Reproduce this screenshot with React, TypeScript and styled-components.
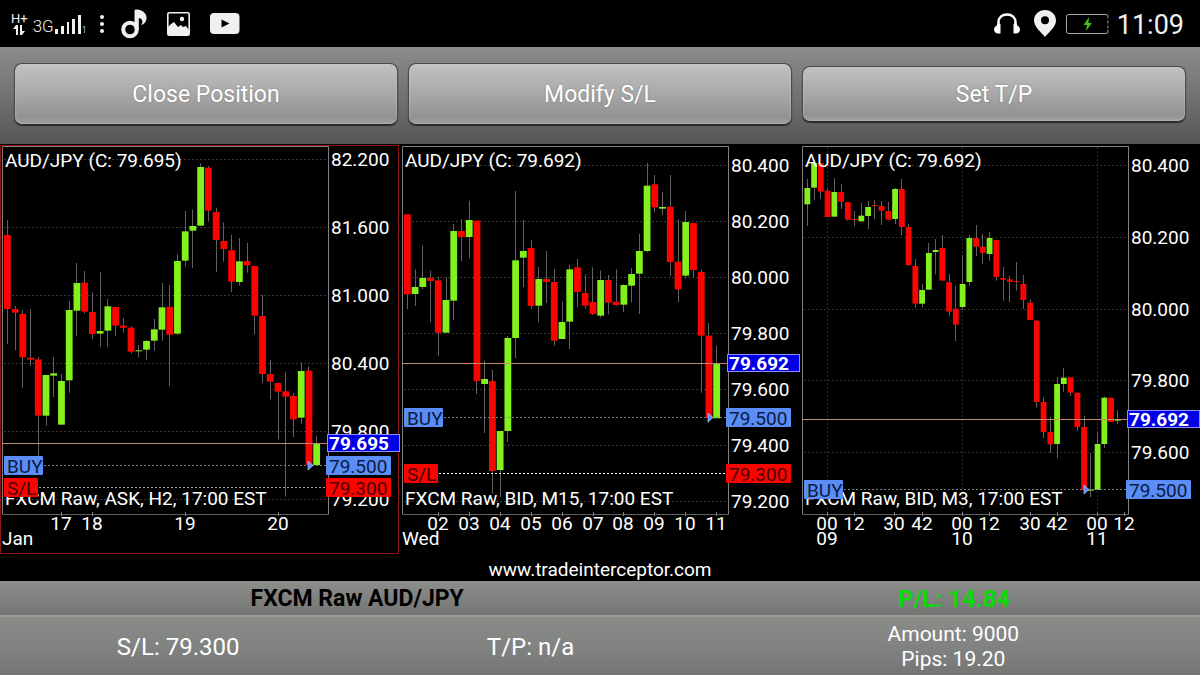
import React from "react";
import styled, { createGlobalStyle } from "styled-components";

const GlobalStyle = createGlobalStyle`
  * { box-sizing: border-box; }
  body { margin: 0; background: #000; font-family: Roboto, "Liberation Sans", sans-serif; }
`;

const Screen = styled.div`
  min-height: 100vh;
  display: flex;
  flex-direction: column;
  background: #000;
  color: #fff;
`;

/* ---------- status bar ---------- */

const StatusBar = styled.header`
  height: 47px;
  display: flex;
  align-items: center;
  justify-content: space-between;
  padding: 0 16px 0 11px;
  color: #f0f0f0;
`;

const StatusGroup = styled.div<{ $gap: number }>`
  display: flex;
  align-items: center;
  gap: ${(p) => p.$gap}px;
`;

const DataMode = styled.div`
  display: flex;
  flex-direction: column;
  align-items: center;
  font-size: 13px;
  line-height: 13px;
`;

const NetworkType = styled.div`
  display: flex;
  align-items: flex-end;
  gap: 1px;
  font-size: 17px;
  font-weight: 300;
  line-height: 18px;
  padding-top: 2px;
`;

const SimSlot = styled.span`
  font-size: 9px;
  line-height: 10px;
`;

const Clock = styled.time`
  font-size: 27px;
  line-height: 32px;
  padding-top: 2px;
`;

/* ---------- toolbar ---------- */

const Toolbar = styled.nav`
  display: grid;
  grid-template-columns: repeat(3, 1fr);
  gap: 10px;
  align-items: center;
  height: 97px;
  padding: 0 14px 3px;
  background: linear-gradient(#8c8c8c, #727272 50%, #565656);
`;

const ToolButton = styled.button<{ $flat?: boolean }>`
  height: ${(p) => (p.$flat ? 56 : 62)}px;
  padding: 2px 8px 0;
  border: 1px solid #4a4a4a;
  border-bottom-color: #2a2a2a;
  border-radius: 8px;
  background: linear-gradient(#c2c2c2, #a8a8a8 50%, #929292 88%, #a0a0a0);
  box-shadow: 0 1px 1px #2a2a2a, inset 0 0 2px #d0d0d0;
  color: #fff;
  font: 400 23px/30px Roboto, "Liberation Sans", sans-serif;
  text-shadow: 0 0 2px rgba(60, 60, 60, 0.4);
`;

/* ---------- charts ---------- */

const ChartRow = styled.main`
  display: grid;
  grid-template-columns: repeat(3, 1fr);
`;

const ChartSvg = styled.svg`
  display: block;
  width: 100%;
  height: auto;
  font-family: Roboto, "Liberation Sans", sans-serif;
  font-size: 19px;
  fill: #fff;
`;

const SiteLine = styled.p`
  margin: 0;
  padding-top: 4px;
  font-size: 19px;
  line-height: 22px;
  text-align: center;
`;

/* ---------- position summary ---------- */

const Summary = styled.footer`
  flex: 1;
  display: flex;
  flex-direction: column;
  background: #80827f;
`;

const SummaryTitle = styled.div`
  display: grid;
  grid-template-columns: 10fr 7fr;
  align-items: center;
  height: 34px;
  padding-left: 6px;
  text-align: center;
  color: #000;
  border-top: 1px solid #8e8e8e;
  background: linear-gradient(#8b8d8a, #757673);
`;

const Instrument = styled.strong`
  font-size: 23px;
  line-height: 32px;
  font-weight: 700;
`;

const Profit = styled.strong`
  font-size: 24px;
  line-height: 34px;
  font-weight: 700;
  color: #0ad80a;
`;

const SummaryBody = styled.div`
  flex: 1;
  display: grid;
  grid-template-columns: 5fr 5fr 7fr;
  align-items: center;
  min-height: 60px;
  padding: 2px 0 0 2px;
  text-align: center;
  border-top: 2px solid #9b9c9a;
  background: linear-gradient(#8a8c88, #7f8180 60%, #757573);
`;

const Level = styled.span`
  font-size: 24px;
  line-height: 32px;
`;

const Stats = styled.div`
  font-size: 21px;
  line-height: 25px;
`;

/* ---------- chart data ---------- */

/* direction, body top, body bottom, wick top, wick bottom, in thirds of a unit */
type Candle = ["u" | "d", number, number, number, number];

interface Label {
  at: number;
  text: string;
}

interface ChartSpec {
  title: string;
  caption: string;
  step: number;
  candles: Candle[];
  prices: Label[];
  times: Label[];
  dates: Label[];
  verticals?: number[];
  current: Label;
  buy: { at: number; text: string; arrow: number };
  stop?: Label;
  selected?: boolean;
}

const twoHours: Candle[] = [
  ["d", 270, 492, 225, 597], ["d", 492, 503, 483, 615], ["d", 507, 637, 495, 728],
  ["d", 638, 644, 492, 663], ["d", 643, 812, 636, 933], ["u", 690, 812, 690, 842],
  ["u", 685, 692, 636, 756], ["u", 708, 839, 687, 839], ["u", 495, 706, 468, 743],
  ["u", 414, 497, 354, 573], ["d", 413, 500, 378, 506], ["d", 501, 567, 443, 582],
  ["u", 558, 566, 381, 605], ["u", 484, 557, 462, 605], ["d", 486, 542, 486, 573],
  ["d", 542, 548, 519, 563], ["d", 548, 620, 544, 626], ["u", 616, 619, 600, 637],
  ["u", 588, 614, 585, 645], ["u", 553, 587, 522, 617], ["u", 487, 554, 414, 587],
  ["d", 486, 569, 420, 723], ["u", 348, 566, 328, 570], ["u", 259, 347, 198, 365],
  ["u", 243, 257, 193, 369], ["u", 66, 242, 55, 242], ["d", 68, 197, 63, 230],
  ["d", 201, 285, 188, 381], ["d", 288, 312, 232, 350], ["d", 316, 410, 270, 441],
  ["u", 349, 411, 279, 422], ["d", 348, 361, 294, 383], ["d", 363, 512, 363, 568],
  ["d", 513, 687, 450, 713], ["d", 687, 710, 645, 763], ["d", 714, 740, 714, 883],
  ["d", 739, 755, 682, 1055], ["d", 753, 823, 744, 876], ["u", 678, 818, 652, 836],
  ["d", 677, 960, 664, 960], ["u", 897, 960, 872, 960],
];

const fifteenMinutes: Candle[] = [
  ["d", 208, 448, 208, 492], ["u", 426, 447, 373, 483], ["u", 399, 426, 302, 432],
  ["d", 399, 408, 377, 531], ["d", 406, 563, 396, 633], ["u", 465, 563, 398, 563],
  ["u", 258, 467, 237, 525], ["d", 258, 276, 222, 348], ["u", 225, 276, 167, 339],
  ["d", 227, 708, 227, 747], ["u", 702, 717, 647, 864], ["d", 708, 978, 675, 1045],
  ["u", 858, 975, 858, 1056], ["u", 579, 858, 573, 891], ["u", 346, 579, 138, 639],
  ["u", 318, 338, 225, 426], ["d", 309, 483, 285, 491], ["u", 402, 482, 366, 531],
  ["d", 402, 411, 318, 474], ["d", 411, 587, 372, 602], ["u", 531, 582, 471, 582],
  ["u", 373, 530, 360, 612], ["d", 367, 441, 342, 487], ["d", 444, 482, 388, 491],
  ["d", 471, 507, 367, 510], ["u", 405, 512, 377, 518], ["d", 405, 473, 390, 508],
  ["d", 470, 480, 373, 482], ["u", 420, 479, 418, 501], ["u", 387, 422, 369, 472],
  ["u", 318, 386, 267, 507], ["u", 122, 318, 54, 322], ["d", 118, 187, 90, 201],
  ["u", 186, 191, 141, 210], ["d", 185, 351, 90, 393], ["d", 350, 433, 222, 471],
  ["u", 231, 392, 198, 401], ["d", 234, 375, 234, 397], ["d", 381, 572, 373, 743],
  ["d", 572, 819, 534, 834], ["u", 655, 820, 602, 820],
];

const threeMinutes: Candle[] = [
  ["u", 129, 178, 102, 243], ["u", 54, 128, 50, 165], ["d", 54, 140, 54, 161],
  ["d", 137, 216, 130, 216], ["u", 141, 215, 99, 215], ["d", 141, 170, 117, 192],
  ["d", 171, 224, 171, 227], ["d", 222, 224, 198, 243], ["u", 212, 229, 173, 229],
  ["u", 186, 213, 168, 252], ["d", 180, 183, 165, 222], ["d", 183, 197, 168, 240],
  ["d", 198, 224, 171, 224], ["u", 132, 222, 129, 237], ["d", 132, 246, 102, 270],
  ["d", 246, 360, 237, 363], ["d", 363, 476, 342, 488], ["u", 435, 476, 417, 488],
  ["u", 324, 434, 294, 434], ["u", 315, 321, 282, 388], ["d", 309, 407, 270, 407],
  ["d", 412, 500, 387, 512], ["d", 491, 539, 423, 588], ["u", 417, 486, 330, 495],
  ["u", 279, 411, 270, 422], ["d", 279, 305, 240, 333], ["d", 305, 324, 267, 357],
  ["u", 279, 327, 261, 347], ["d", 285, 396, 285, 407], ["d", 399, 404, 366, 467],
  ["d", 403, 410, 392, 471], ["d", 408, 411, 351, 437], ["d", 417, 465, 390, 492],
  ["d", 473, 525, 463, 525], ["d", 527, 771, 525, 788], ["d", 771, 861, 758, 879],
  ["d", 861, 898, 816, 924], ["u", 717, 897, 696, 939], ["u", 698, 717, 669, 740],
  ["d", 697, 743, 697, 753], ["d", 743, 846, 743, 857], ["d", 846, 1035, 812, 1035],
  ["u", 1034, 1037, 924, 1056], ["u", 897, 1035, 860, 1035], ["u", 758, 897, 755, 909],
  ["d", 758, 831, 758, 831], ["u", 824, 827, 795, 837],
];

const labels = (first: number, step: number, texts: string[]): Label[] =>
  texts.map((text, i) => ({ at: first + i * step, text }));

const charts: ChartSpec[] = [
  {
    title: "AUD/JPY (C: 79.695)",
    caption: "FXCM Raw, ASK, H2, 17:00 EST",
    step: 23.2,
    candles: twoHours,
    prices: labels(43, 204, ["82.200", "81.600", "81.000", "80.400", "79.800", "79.200"]),
    times: [
      { at: 185, text: "17" }, { at: 278, text: "18" },
      { at: 556, text: "19" }, { at: 834, text: "20" },
    ],
    dates: [{ at: 0, text: "Jan" }],
    current: { at: 896, text: "79.695" },
    buy: { at: 962, text: "79.500", arrow: 925 },
    stop: { at: 1028, text: "79.300" },
    selected: true,
  },
  {
    title: "AUD/JPY (C: 79.692)",
    caption: "FXCM Raw, BID, M15, 17:00 EST",
    step: 23.2,
    candles: fifteenMinutes,
    prices: labels(61, 168, ["80.400", "80.200", "80.000", "79.800", "79.600", "79.400", "79.200"]),
    times: labels(116, 92.6, ["02", "03", "04", "05", "06", "07", "08", "09", "10", "11"]),
    dates: [{ at: 0, text: "Wed" }],
    current: { at: 655, text: "79.692" },
    buy: { at: 818, text: "79.500", arrow: 925 },
    stop: { at: 985, text: "79.300" },
  },
  {
    title: "AUD/JPY (C: 79.692)",
    caption: "FXCM Raw, BID, M3, 17:00 EST",
    step: 20.25,
    candles: threeMinutes,
    prices: labels(61, 215.5, ["80.400", "80.200", "80.000", "79.800", "79.600"]),
    times: [
      { at: 82, text: "00" }, { at: 163, text: "12" }, { at: 284, text: "30" },
      { at: 366, text: "42" }, { at: 487, text: "00" }, { at: 568, text: "12" },
      { at: 690, text: "30" }, { at: 771, text: "42" }, { at: 892, text: "00" },
      { at: 974, text: "12" },
    ],
    dates: [{ at: 82, text: "09" }, { at: 487, text: "10" }, { at: 892, text: "11" }],
    verticals: [82, 487, 892],
    current: { at: 823, text: "79.692" },
    buy: { at: 1032, text: "79.500", arrow: 852 },
  },
];

const px = (v: number) => Math.floor(v / 3);

function OrderTags({ y, color, ink, name, price }: {
  y: number; color: string; ink: string; name: string; price: string;
}) {
  const width = name === "BUY" ? 39 : 34;
  return (
    <g>
      <rect x={4} y={y - 9} width={width} height={19} rx={1} fill={color} />
      <text x={7} y={y + 8} fill={ink}>{name}</text>
      <rect x={326} y={y - 9} width={65} height={19} rx={1} fill={color} />
      <text x={329} y={y + 8} fill={ink}>{price}</text>
    </g>
  );
}

function Chart({ spec }: { spec: ChartSpec }) {
  const current = px(spec.current.at);
  const buy = px(spec.buy.at);
  const stop = spec.stop ? px(spec.stop.at) : 0;
  const arrow = px(spec.buy.arrow);
  return (
    <ChartSvg viewBox="0 -1 400 411" role="img" aria-label={spec.title}>
      {spec.selected && (
        <rect x={0.5} y={0.5} width={398} height={408} fill="none" stroke="#8c1616" />
      )}
      <g stroke={spec.verticals ? "#2c2c2c" : "#383838"} strokeDasharray="2 2">
        {spec.prices.map((p) => (
          <line key={p.at} x1={4} x2={328} y1={px(p.at) + 0.5} y2={px(p.at) + 0.5} />
        ))}
        {spec.verticals?.map((v) => (
          <line key={v} x1={px(v) + 0.5} x2={px(v) + 0.5} y1={2} y2={369} />
        ))}
      </g>
      <path d="M2.5 369V1.5H328.5V369.5" fill="none" stroke="#808080" />
      <path d="M2.5 369.5H328.5" stroke="#606060" />
      {spec.times.map((t) => (
        <line key={t.at} x1={px(t.at) + 0.5} x2={px(t.at) + 0.5} y1={367} y2={371} stroke="#808080" />
      ))}

      {spec.candles.map(([dir, top, bottom, high, low], i) => {
        const x = (22 + i * spec.step) / 3;
        const half = spec.step > 22 ? 3.4 : 2.9;
        return (
          <g key={i}>
            <line x1={Math.floor(x) + 0.5} x2={Math.floor(x) + 0.5} y1={high / 3} y2={low / 3} stroke="#626262" />
            <rect
              x={x - half}
              y={top / 3}
              width={half * 2}
              height={Math.max(1, (bottom - top) / 3)}
              fill={dir === "u" ? "#84f01c" : "#fb0400"}
            />
          </g>
        );
      })}

      <line x1={2} x2={328} y1={current + 0.5} y2={current + 0.5} stroke="#c08a6c" />
      <line x1={44} x2={326} y1={buy + 0.5} y2={buy + 0.5} stroke="#7c7c7c" strokeDasharray="2 2" />
      {spec.stop && (
        <line x1={39} x2={326} y1={stop + 0.5} y2={stop + 0.5}
          stroke={spec.selected ? "#a0a0a0" : "#fff"} strokeDasharray="2 2" />
      )}
      <path d={`M${arrow} ${buy - 4}l5 4.500l-5 4.500z`} fill="#5b8fff" stroke="#c8d8ff" strokeWidth={0.6} />

      <text x={5} y={22}>{spec.title}</text>
      <text x={5} y={360}>{spec.caption}</text>
      {spec.prices.map((p) => (
        <text key={p.at} x={331} y={px(p.at) + 7}>{p.text}</text>
      ))}
      {spec.times.map((t) => (
        <text key={t.at} x={px(t.at)} y={385} textAnchor="middle">{t.text}</text>
      ))}
      {spec.dates.map((d) => (
        <text key={d.at} x={d.at ? px(d.at) : 2} y={400} textAnchor={d.at ? "middle" : "start"}>{d.text}</text>
      ))}

      <OrderTags y={buy} color="#5a8df5" ink="#0c1c40" name="BUY" price={spec.buy.text} />
      {spec.stop && <OrderTags y={stop} color="#fb0400" ink="#4a0000" name="S/L" price={spec.stop.text} />}
      <rect x={327.5} y={current - 8.5} width={72} height={17} fill="#0000e6" stroke="#8c8cff" />
      <text x={329} y={current + 7} fontWeight={700}>{spec.current.text}</text>
    </ChartSvg>
  );
}

/* ---------- status icons ---------- */

const Arrows = () => (
  <svg width="12" height="11" viewBox="0 0 12 11" fill="#f0f0f0">
    <path d="M3 0h2v10H3V4H0zM7 0h2v6h3L9 10H7z" />
  </svg>
);

const SignalBars = () => (
  <svg width="26" height="20" viewBox="0 0 26 20" fill="#f0f0f0">
    <path d="M0 14h3v5H0zM6 11h3v8H6zM12 7h2v12h-2zM17 4h3v15h-3zM23 0h3v19h-3z" />
  </svg>
);

const Dots = () => (
  <svg width="4" height="18" viewBox="0 0 4 18" fill="#f0f0f0">
    <circle cx="2" cy="2" r="2" /><circle cx="2" cy="9" r="2" /><circle cx="2" cy="16" r="2" />
  </svg>
);

const NoteIcon = () => (
  <svg width="26" height="30" viewBox="0 0 26 30">
    <circle cx="9" cy="20.500" r="6.800" fill="none" stroke="#f0f0f0" strokeWidth="4" />
    <path d="M13.500 20V2C13.500 0.500 15 0.500 16 0.600C21 1 25.500 4 25.500 9C25.500 13 23 15.500 20 16C22 14 22.500 10 17.800 9V21z" fill="#f0f0f0" />
  </svg>
);

const PictureIcon = () => (
  <svg width="23" height="24" viewBox="0 0 23 24">
    <rect x="0.800" y="0.800" width="21.400" height="22.400" rx="1.500" fill="none" stroke="#f0f0f0" strokeWidth="1.600" />
    <path d="M1 15L4 12L7 10L11 15L14 13L16 15L19 14L22 18V23H1z" fill="#f0f0f0" />
    <circle cx="15" cy="7" r="2.200" fill="#f0f0f0" />
  </svg>
);

const VideoIcon = () => (
  <svg width="30" height="21" viewBox="0 0 30 21">
    <rect x="0" y="0" width="29.500" height="21" rx="4" fill="#f0f0f0" />
    <path d="M11.500 6.500L19.500 10.500L11.500 14.500z" fill="#000" />
  </svg>
);

const HeadphonesIcon = () => (
  <svg width="26" height="21" viewBox="0 0 26 21">
    <path d="M4.500 14V9.500C4.500 4.500 8 1.500 13 1.500S21.500 4.500 21.500 9.500V14" fill="none" stroke="#fff" strokeWidth="2.600" />
    <path d="M6.500 11V20.500H4C1.500 20.500 0 18.500 0 16.500S2 12.500 3 12.500V11zM19.500 11V20.500H22C24.500 20.500 26 18.500 26 16.500S24 12.500 23 12.500V11z" fill="#fff" />
  </svg>
);

const PinIcon = () => (
  <svg width="22" height="27" viewBox="0 0 22 27">
    <path fillRule="evenodd" d="M11 0C17 0 22 4.500 22 10.500C22 17 15 22 11 27C7 22 0 17 0 10.500C0 4.500 5 0 11 0zM11 6.200A4 4 0 1 0 11 14.200A4 4 0 1 0 11 6.200z" fill="#f0f0f0" />
  </svg>
);

const BatteryIcon = () => (
  <svg width="44" height="20" viewBox="0 0 44 20">
    <rect x="0.500" y="0.500" width="41.500" height="19" rx="2" fill="none" stroke="#a8a8a8" />
    <path d="M42.500 4v3M42.500 9v3M42.500 14v2" stroke="#000" strokeWidth="2" />
    <path d="M23 3L17.500 11H21L20 17L26 9H22.500z" fill="#45c01b" />
  </svg>
);

export default function App() {
  return (
    <Screen>
      <GlobalStyle />
      <StatusBar>
        <StatusGroup $gap={20}>
          <StatusGroup $gap={17}>
            <StatusGroup $gap={13}>
              <StatusGroup $gap={5}>
                <DataMode>H+<Arrows /></DataMode>
                <NetworkType>3G<SignalBars /><SimSlot>1</SimSlot></NetworkType>
              </StatusGroup>
              <Dots />
            </StatusGroup>
            <NoteIcon />
          </StatusGroup>
          <PictureIcon />
          <VideoIcon />
        </StatusGroup>
        <StatusGroup $gap={7}>
          <StatusGroup $gap={10}>
            <StatusGroup $gap={14}>
              <HeadphonesIcon />
              <PinIcon />
            </StatusGroup>
            <BatteryIcon />
          </StatusGroup>
          <Clock>11:09</Clock>
        </StatusGroup>
      </StatusBar>

      <Toolbar>
        <ToolButton type="button">Close Position</ToolButton>
        <ToolButton type="button">Modify S/L</ToolButton>
        <ToolButton type="button" $flat>Set T/P</ToolButton>
      </Toolbar>

      <ChartRow>
        {charts.map((spec) => <Chart key={spec.caption} spec={spec} />)}
      </ChartRow>
      <SiteLine>www.tradeinterceptor.com</SiteLine>

      <Summary>
        <SummaryTitle>
          <Instrument>FXCM Raw AUD/JPY</Instrument>
          <Profit>P/L: 14.84</Profit>
        </SummaryTitle>
        <SummaryBody>
          <Level>S/L: 79.300</Level>
          <Level>T/P: n/a</Level>
          <Stats>
            <div>Amount: 9000</div>
            <div>Pips: 19.20</div>
          </Stats>
        </SummaryBody>
      </Summary>
    </Screen>
  );
}
